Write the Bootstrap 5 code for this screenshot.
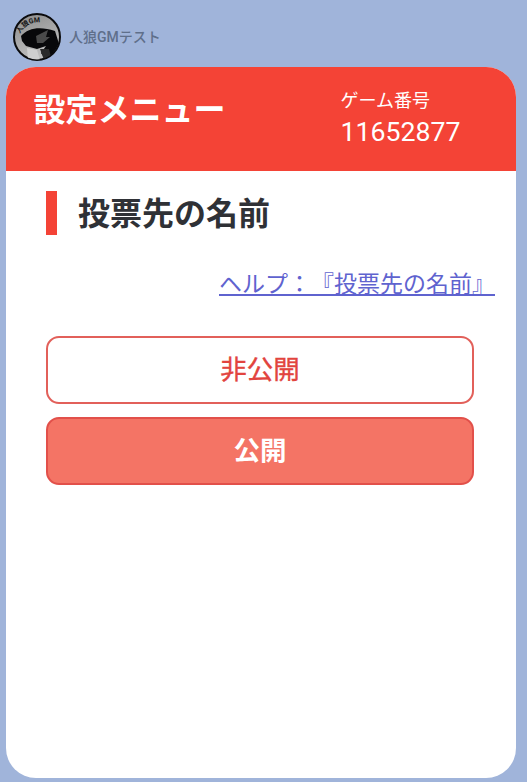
<!DOCTYPE html>
<html lang="ja">
<head>
<meta charset="utf-8">
<title>設定メニュー</title>
<link rel="stylesheet" href="https://cdn.jsdelivr.net/npm/bootstrap@5.3.0/dist/css/bootstrap.min.css">
<style>
html,body{height:100%;}
body{background:#a0b4da;font-family:Roboto,"Noto Sans CJK JP",sans-serif;color:#2f3136;overflow:hidden;}
.page-wrap{height:782px;padding:13px 11px 4px 6px;}
.sender{height:48px;padding-left:7px;gap:8px;margin-bottom:6px;}
.avatar-pic{width:48px;height:48px;flex:none;display:block;}
.sender-name{font-size:14px;color:#5f6f8a;font-weight:500;line-height:1;}
.menu-card{height:711px;border-radius:30px;overflow:hidden;background:#fff;border:0;}
.menu-head{height:104px;background:#f44336;color:#fff;padding:0 0 0 28px;flex:none;}
.menu-title{font-size:32px;font-weight:700;line-height:1;margin:27px 0 0 -0.5px;width:307px;flex:none;}
.game-label{font-size:18px;line-height:1;margin-top:25px;}
.game-no{font-size:26.7px;line-height:1;margin-top:9px;}
.menu-body{padding:20px 42px 0 40px;}
.sect-title{border-left:11px solid #f44336;height:44px;padding-left:21px;font-size:32px;font-weight:700;line-height:46px;margin:0;color:#2f3136;}
.help-row{margin:36px -21px 0 0;line-height:28px;font-size:23px;white-space:nowrap;text-spacing-trim:space-all;font-feature-settings:"palt" 0,"halt" 0,"chws" 0;}
.help-row a{color:#5f63cf;}
.act-btn{display:block;width:100%;height:68px;border-radius:13px;font-size:26.5px;line-height:1;padding:0;border:2px solid #e2605a;}
.act-off,.act-off:hover{background:#fff;color:#e2443e;margin-top:37px;font-weight:400;-webkit-text-stroke:.35px #e2443e;}
.act-on,.act-on:hover{background:#f47465;color:#fff;margin-top:13px;font-weight:700;border-color:#e2504a;}
</style>
</head>
<body>
<div class="page-wrap">
  <div class="sender d-flex align-items-center">
    <svg class="avatar-pic" viewBox="0 0 48 48" role="img" aria-label="人狼GM">
      <defs>
        <clipPath id="clipc"><circle cx="24" cy="24" r="22.5"/></clipPath>
        <linearGradient id="shade" x1="0" y1="0" x2="0.4" y2="1"><stop offset="0" stop-color="#8a8a8a"/><stop offset="1" stop-color="#c0c0c0"/></linearGradient>
        <path id="arcp" d="M7 21C12 10 24 6 38 12"/>
      </defs>
      <circle cx="24" cy="24" r="23" fill="url(#shade)" stroke="#0b0b0d" stroke-width="2"/>
      <g clip-path="url(#clipc)">
        <path d="M8 23C15 15 27 13 42 18L47 34 44 42 33 47 28 40 33 33 24 36 13 33 9 28Z" fill="#08080a"/>
        <path d="M23 23 35 17 33 24 37 24 30 30 24 30Z" fill="#4a4a4a"/>
        <path d="M27 36 36 36 38 44 31 47Z" fill="#2a2a2a"/>
        <path d="M14 35 24 37 27 47 15 47Z" fill="#cfcfcf"/>
      </g>
      <text font-size="7" font-weight="700" fill="#141414" font-family="Roboto,'Noto Sans CJK JP',sans-serif"><textPath href="#arcp">人狼GM</textPath></text>
    </svg>
    <span class="sender-name">人狼GMテスト</span>
  </div>
  <div class="card menu-card">
    <div class="menu-head d-flex">
      <h1 class="menu-title">設定メニュー</h1>
      <div>
        <div class="game-label">ゲーム番号</div>
        <div class="game-no">11652877</div>
      </div>
    </div>
    <div class="menu-body">
      <h2 class="sect-title">投票先の名前</h2>
      <div class="help-row text-end"><a href="#">ヘルプ&#xFF1A;『投票先の名前』</a></div>
      <button type="button" class="btn act-btn act-off">非公開</button>
      <button type="button" class="btn act-btn act-on">公開</button>
    </div>
  </div>
</div>
<script src="https://cdn.jsdelivr.net/npm/bootstrap@5.3.0/dist/js/bootstrap.bundle.min.js"></script>
</body>
</html>
